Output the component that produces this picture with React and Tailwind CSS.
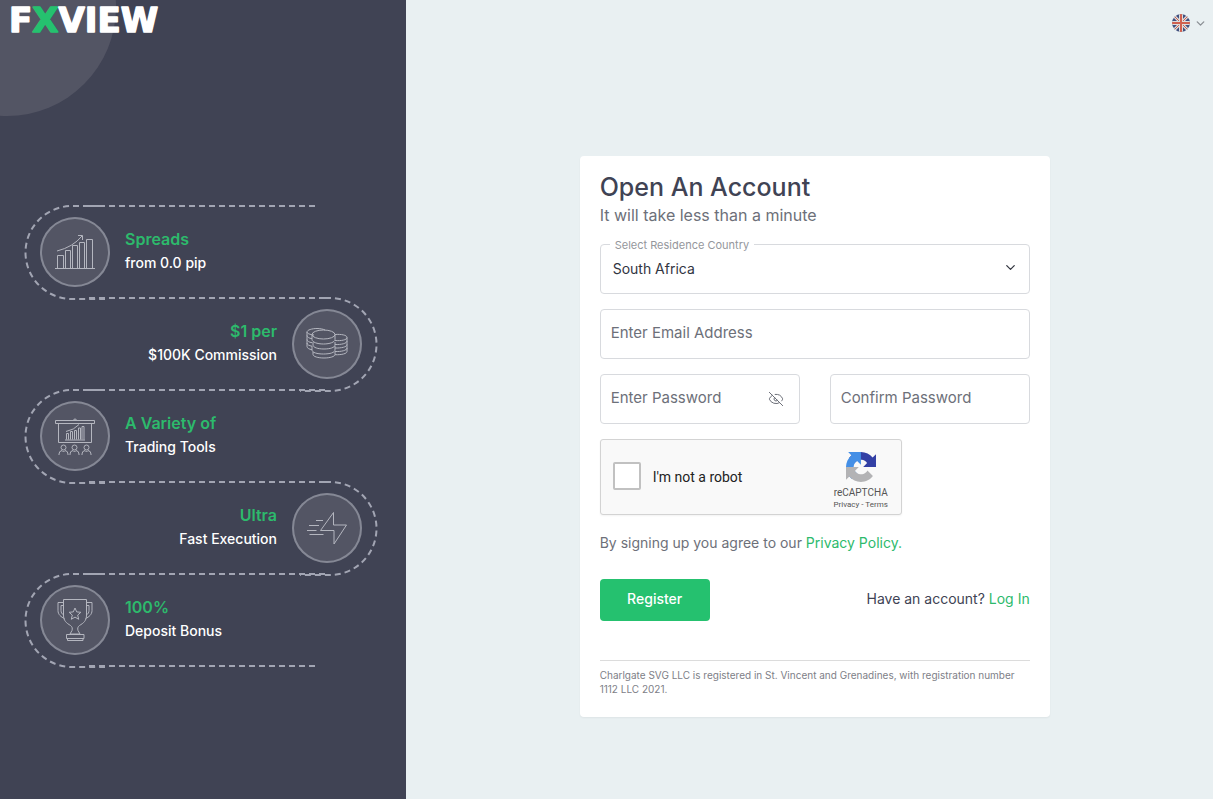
import { useState } from 'react';
import { ChevronDown, EyeOff } from 'lucide-react';

/* ── Feature icons, drawn on the 70px badge ── */
const iconProps = {
  viewBox: '0 0 70 70',
  className: 'size-[70px] shrink-0',
  fill: 'none',
  stroke: '#b4b6bf',
  strokeWidth: 1,
  strokeLinejoin: 'round',
  'aria-hidden': true,
};

const ChartIcon = () => (
  <svg {...iconProps}>
    <path d="M17.5 51V38.5h6V51M25.5 51V33.5h5V51M32.5 51V28.5h5V51M39.5 51V25.5h5V51M46.5 51V22.5h6V51M15 51.5h40" />
    <path d="M17 34Q33 30 42 19M38 18.5h4.5V23" />
  </svg>
);

const CoinsIcon = () => (
  <svg {...iconProps}>
    <path d="M22 26c-4-.4-7-1.500-7-3 0-2 5-3.500 10-3.500 3 0 6 .5 8 1.500M15 23v14.500c0 1.500 2 2.800 5 3.200M15 26.500c0 1.500 2 2.800 5 3.200M15 30.500c0 1.500 2 2.800 5 3.200M15 34c0 1.500 2 2.800 5 3.200" />
    <ellipse cx="31.500" cy="25.500" rx="11.500" ry="4.500" />
    <path d="M20 25.500v5c0 2.500 5 4.500 11.500 4.500S43 33 43 30.500v-5M21 33v3c0 2.500 5 4 11 4s11-1.500 11-4v-3M20 37v4c0 2.500 5 4 11.500 4S43 43.500 43 41v-4M21 43v2.500c0 2 5 3.500 11 3.500s11-1.500 11-3.500V43" />
    <path d="M43 25.500c6-.5 12 .5 12 3s-6 3.500-12 3M55 28.500v14c0 2-5 3.500-12 3.200M55 32c0 2.500-6 3.800-12 3.500M55 35.500c0 2.500-6 3.800-12 3.500M55 39c0 2.500-6 3.800-12 3.500" />
  </svg>
);

const BoardIcon = () => (
  <svg {...iconProps}>
    <path d="M15.500 19.500h39v3h-39zM18.500 22.500v19h33v-19M33.500 19.500a1.500 1.500 0 1 1 3 0" />
    <path d="M26.500 38.500v-6h2v6M30.500 38.500v-8h2v8M34.500 38.500v-9h2v9M38.500 38.500V27h2v11.500M42 38.500V25.500h2v13M25 39h20M26 30.500Q34 29 39 23.500" />
    {[23.5, 34.5, 46.5].map((x) => (
      <g key={x}>
        <circle cx={x} cy="46.500" r="2.500" />
        <path d={`M${x - 4.5} 54v-1q0-3 3-3.500l1.500 1.500 1.500-1.500q3 .5 3 3.500v1`} />
      </g>
    ))}
  </svg>
);

const BoltIcon = () => (
  <svg {...iconProps}>
    <path d="M41.500 19.500V32h13L42 51V37.500H28.500zM24 27.500h7M17 32.500h10M15 37.500h9.500M17.500 41.500h14" />
  </svg>
);

const TrophyIcon = () => (
  <svg {...iconProps}>
    <path d="M23.500 14.500h23V30c0 6-3 8-7 10.500-2 1.500-2 3-1.500 5l2 3.500H30l2-3.500c.5-2 .5-3.500-1.500-5-4-2.500-7-4.500-7-10.500z" />
    <path d="M23.500 17.500h-5.500v8c0 4 3 6.500 6.500 8M23.500 20.500h-2.500v5c0 2 1 3.500 2.500 4.500M46.500 17.500H52v8c0 4-3 6.500-6.500 8M46.500 20.500H49v5c0 2-1 3.500-2.500 4.500" />
    <path d="M26.500 49.500h17.500v4H26.500zM27.500 53.500v2h15.500v-2M35 23l1.700 3.900 4.200.4-3.200 2.800 1 4.200-3.700-2.200-3.700 2.200 1-4.200-3.200-2.800 4.200-.4z" />
  </svg>
);

const FEATURES = [
  { title: 'Spreads', text: 'from 0.0 pip', Icon: ChartIcon },
  { title: '$1 per', text: '$100K Commission', Icon: CoinsIcon },
  { title: 'A Variety of', text: 'Trading Tools', Icon: BoardIcon },
  { title: 'Ultra', text: 'Fast Execution', Icon: BoltIcon },
  { title: '100%', text: 'Deposit Bonus', Icon: TrophyIcon },
];

/* Dashed trail that runs round each feature, alternating sides */
function Trail({ right, first, last }) {
  return (
    <svg
      className="absolute -left-10 top-0 h-[94px] w-[380px] overflow-visible"
      viewBox="0 0 380 94" fill="none" stroke="#a2a5b3" strokeWidth="2" strokeDasharray="6 4" aria-hidden="true"
    >
      {!right && <path d="M83 0h22" strokeDasharray="none" />}
      <path d={first ? 'M89 0H315' : 'M89 0H325'} />
      {right
        ? <path d="M325 0h5a46 46 0 0 1 0 93H300" />
        : <path d="M79 0H72a46 46 0 0 0 0 93H105" />}
      {last && <path d="M89 92H315" />}
    </svg>
  );
}

function Feature({ title, text, Icon, index }) {
  const right = index % 2 === 1;
  return (
    <li className={`relative flex h-[92px] items-center gap-[15px] ${right ? 'flex-row-reverse text-right' : ''}`}>
      <Trail right={right} first={index === 0} last={index === FEATURES.length - 1} />
      <div className="relative flex size-[70px] shrink-0 items-center justify-center rounded-full bg-[#535564] ring-2 ring-[#858895] ring-inset">
        <Icon />
      </div>
      <div className="relative pb-[2px]">
        <h2 className="text-[16px] leading-6 font-semibold text-[#2dba6c]">{title}</h2>
        <p className="text-[14px] leading-6 font-medium text-white">{text}</p>
      </div>
    </li>
  );
}

function Logo() {
  return (
    <svg className="relative h-[42px] w-[180px]" viewBox="0 0 180 42" role="img" aria-label="FXVIEW">
      <text
        x="9" y="32" fontFamily="DejaVu Sans, sans-serif" fontSize="34" fontWeight="700"
        fill="#fff" stroke="#fff" strokeWidth="1.500" strokeLinejoin="round"
      >
        F<tspan fill="#25c16f" stroke="#25c16f">X</tspan>VIEW
      </text>
    </svg>
  );
}

const FlagIcon = () => (
  <svg viewBox="0 0 18 18" className="size-[18px]" aria-hidden="true">
    <clipPath id="flag"><circle cx="9" cy="9" r="9" /></clipPath>
    <g clipPath="url(#flag)">
      <path d="M0 0h18v18H0z" fill="#41507f" />
      <path d="M0 0l18 18M18 0L0 18" stroke="#ddd" strokeWidth="3" />
      <path d="M0 0l18 18M18 0L0 18" stroke="#d0604f" strokeWidth="1" />
      <path d="M9 0v18M0 9h18" stroke="#ddd" strokeWidth="4" />
      <path d="M9 0v18M0 9h18" stroke="#d0604f" strokeWidth="2" />
    </g>
  </svg>
);

const RecaptchaLogo = () => (
  <svg viewBox="0 0 64 64" className="size-[30px]" aria-hidden="true">
    <path fill="#3340a5" d="M64 31.955l-.033-1.370V4.687l-7.160 7.160C50.948 4.674 42.033.093 32.050.093c-10.400 0-19.622 4.960-25.458 12.640l11.736 11.860a15.550 15.550 0 0 1 4.754-5.334c2.050-1.600 4.952-2.906 8.968-2.906.485 0 .860.057 1.135.163 4.976.393 9.288 3.140 11.828 7.124l-8.307 8.307L64 31.953" />
    <path fill="#448fe6" d="M31.862.094l-1.370.033H4.594l7.160 7.160C4.580 13.147 0 22.060 0 32.046c0 10.400 4.960 19.622 12.640 25.458L24.500 45.768a15.550 15.550 0 0 1-5.334-4.754c-1.600-2.050-2.906-4.952-2.906-8.968 0-.485.057-.860.163-1.135.393-4.976 3.140-9.288 7.124-11.828l8.307 8.307L31.860.095" />
    <path fill="#b3b3b5" d="M.001 32.045l.033 1.370v25.898l7.160-7.160c5.860 7.173 14.774 11.754 24.760 11.754 10.400 0 19.622-4.960 25.458-12.640l-11.736-11.860a15.550 15.550 0 0 1-4.754 5.334c-2.050 1.600-4.952 2.906-8.968 2.906-.485 0-.860-.057-1.135-.163-4.976-.393-9.288-3.140-11.828-7.124l8.307-8.307c-10.522.040-22.400.066-27.295-.005" />
  </svg>
);

const inputClass =
  'h-[50px] w-full rounded border border-[#d8dade] bg-white px-[10px] pb-1 text-[15px] text-[#404354] outline-none placeholder:text-[#6d7079] focus:border-[#25c16f]';

export default function App() {
  const [country, setCountry] = useState('South Africa');
  const [showPassword, setShowPassword] = useState(false);

  return (
    <div className="flex min-h-screen bg-[#e9f0f2] font-['Inter',sans-serif]">
      {/* Promo column */}
      <aside className="relative flex w-[33.5%] flex-col overflow-hidden bg-[#404354]">
        <div className="absolute -top-[102px] -left-[102px] size-[218px] rounded-full bg-[#535564]" />
        <div className="h-[72px]">
          <Logo />
        </div>
        <div className="flex flex-1 items-center pl-10">
          <ul className="w-[322px]">
            {FEATURES.map((f, i) => <Feature key={f.title} {...f} index={i} />)}
          </ul>
        </div>
      </aside>

      {/* Sign up column */}
      <div className="flex flex-1 flex-col">
        <header className="flex h-[74px] items-start justify-end pt-[14px] pr-[6px]">
          <button type="button" aria-label="Language" className="flex items-center gap-1 text-[#8b9095]">
            <FlagIcon />
            <ChevronDown size={13} strokeWidth={2.5} />
          </button>
        </header>

        <main className="flex flex-1 items-center justify-center pl-[10px]">
          <form className="w-[470px] rounded bg-white px-5 pt-4 pb-[21px] shadow-xs" onSubmit={(e) => e.preventDefault()}>
            <h1 className="text-[25px] leading-[30px] font-medium text-[#404354]">Open An Account</h1>
            <p className="text-[16px] leading-[26px] text-[#6d7079]">It will take less than a minute</p>

            <div className="relative mt-4">
              <label htmlFor="country" className="absolute -top-[7px] left-[10px] bg-white px-[5px] text-[11px] leading-4 text-[#95979c]">
                Select Residence Country
              </label>
              <select
                id="country"
                className="h-[50px] w-full appearance-none rounded border border-[#d8dade] bg-white px-3 pb-[2px] text-[14px] text-[#32353f] outline-none"
                value={country} onChange={(e) => setCountry(e.target.value)}
              >
                <option>South Africa</option>
                <option>Namibia</option>
                <option>Botswana</option>
              </select>
              <ChevronDown size={15} className="pointer-events-none absolute top-4 right-3 text-[#32353f]" />
            </div>

            <input type="email" aria-label="Enter Email Address" placeholder="Enter Email Address" className={`mt-[15px] ${inputClass}`} />

            <div className="mt-[15px] grid grid-cols-2 gap-[30px]">
              <div className="relative">
                <input
                  type={showPassword ? 'text' : 'password'}
                  aria-label="Enter Password" placeholder="Enter Password" className={inputClass}
                />
                <button
                  type="button" aria-label="Show password" onClick={() => setShowPassword(!showPassword)}
                  className="absolute top-[17px] right-4 text-[#6d7079]"
                >
                  <EyeOff size={16} strokeWidth={1.5} />
                </button>
              </div>
              <input type="password" aria-label="Confirm Password" placeholder="Confirm Password" className={inputClass} />
            </div>

            {/* Captcha */}
            <div className="mt-[15px] flex h-[76px] w-[302px] items-center rounded-[3px] border border-[#d3d3d3] bg-[#f9f9f9] pl-3 font-['Roboto',sans-serif] shadow-xs">
              <input id="robot" type="checkbox" className="-mt-[2px] size-7 appearance-none rounded-[2px] border-2 border-[#c1c1c1] bg-white checked:bg-[#25c16f]" />
              <label htmlFor="robot" className="ml-3 flex-1 text-[14px] text-[#222]">I'm not a robot</label>
              <div className="mr-2 flex w-[64px] flex-col items-center pt-2 text-[#555]">
                <RecaptchaLogo />
                <span className="mt-1 text-[10px] leading-[13px]">reCAPTCHA</span>
                <span className="text-[8px] leading-3">
                  <a href="#privacy">Privacy</a> - <a href="#terms">Terms</a>
                </span>
              </div>
            </div>

            <p className="mt-4 text-[14px] leading-6 text-[#6d7079]">
              By signing up you agree to our <a href="#policy" className="text-[#2dba6c]">Privacy Policy.</a>
            </p>

            <div className="mt-6 flex items-center justify-between">
              <button type="submit" className="h-[42px] w-[110px] rounded bg-[#25c16f] pb-[3px] text-[14px] font-medium text-white">Register</button>
              <p className="pb-[3px] text-[14px] text-[#404354]">
                Have an account? <a href="#login" className="text-[#2dba6c]">Log In</a>
              </p>
            </div>

            <p className="mt-[39px] border-t border-[#dcdcdc] pt-[7px] text-[10px] leading-[14px] text-[#7e8087]">
              Charlgate SVG LLC is registered in St. Vincent and Grenadines, with registration number 1112 LLC 2021.
            </p>
          </form>
        </main>
      </div>
    </div>
  );
}
